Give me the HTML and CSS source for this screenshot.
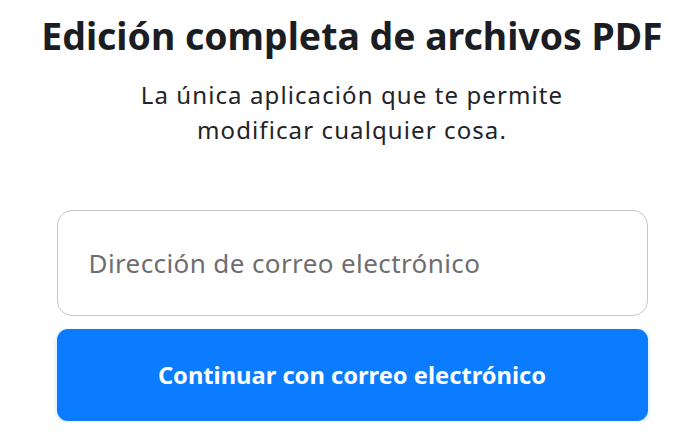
FILE: index.html
```html
<!DOCTYPE html>
<html lang="es">
<head>
<meta charset="utf-8">
<title>Edición completa de archivos PDF</title>
<link rel="stylesheet" href="styles.css">
</head>
<body>
<main class="page">
  <h1 class="title">Edición completa de archivos PDF</h1>
  <p class="subtitle">La única aplicación que te permite<br>modificar cualquier cosa.</p>
  <form class="form">
    <div class="field">
      <input class="email" type="email" placeholder="Dirección de correo electrónico">
    </div>
    <button class="continue" type="button">Continuar con correo electrónico</button>
  </form>
</main>
</body>
</html>
```
FILE: styles.css
```css
html, body {
  margin: 0;
  padding: 0;
  background: #ffffff;
}
body {
  font-family: "Noto Sans", "Open Sans", sans-serif;
  color: #1c1e23;
}
.page {
  width: 700px;
  padding: 11px 0 0 4px;
  box-sizing: border-box;
  display: flex;
  flex-direction: column;
  align-items: center;
}
.title {
  margin: 0;
  font-size: 37.4px;
  line-height: 50px;
  font-weight: 700;
  color: #1b1d22;
  text-align: center;
  white-space: nowrap;
}
.subtitle {
  margin: 16px 0 0;
  font-size: 24px;
  line-height: 35px;
  letter-spacing: 1.1px;
  color: #222326;
  text-align: center;
}
.form {
  margin-top: 63px;
  width: 591px;
  display: flex;
  flex-direction: column;
  gap: 13px;
}
.field {
  display: flex;
}
.email {
  width: 100%;
  height: 106px;
  box-sizing: border-box;
  border: 1.5px solid #c6c6c6;
  border-radius: 15px;
  padding: 0 0 0 31px;
  font-family: inherit;
  font-size: 26px;
  letter-spacing: 0.4px;
  color: #333;
  background: #fff;
  outline: none;
}
.email::placeholder {
  color: #6e6e70;
  opacity: 1;
}
.continue {
  height: 92px;
  border: none;
  border-radius: 11px;
  background: #0b7cff;
  color: #ffffff;
  font-family: inherit;
  font-size: 23.7px;
  font-weight: 700;
  box-shadow: 0 2px 5px rgba(11, 124, 255, 0.25);
  cursor: pointer;
}
```
